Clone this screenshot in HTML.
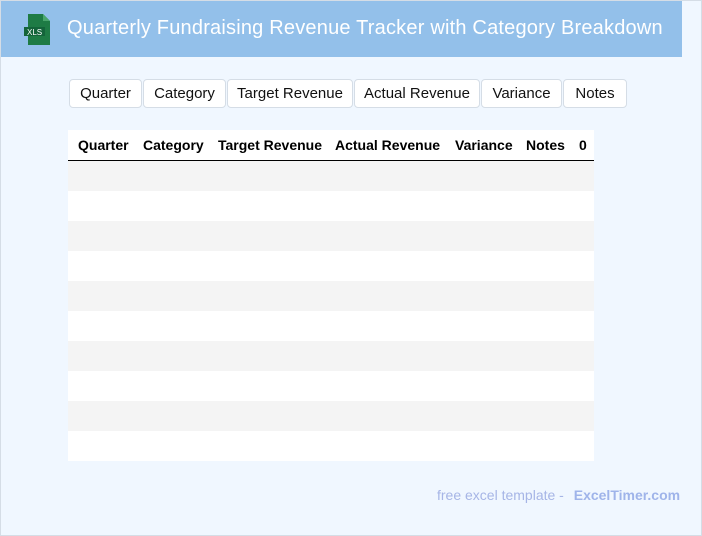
<!DOCTYPE html>
<html><head><style>
body{margin:0;width:702px;height:536px;overflow:hidden;font-family:"Liberation Sans",sans-serif;}
.page{position:absolute;left:0;top:0;width:700px;height:534px;border:1px solid #d5dde6;background:#f0f7ff;}
.hdr{position:absolute;left:0;top:0;width:681px;height:56px;background:#93c0ea;}
.hdr .t{position:absolute;left:66px;top:16px;color:#fff;font-size:20px;letter-spacing:0.2px;}
.icon{position:absolute;left:23px;top:13px;}
.btn{position:absolute;top:78px;height:27px;border:1px solid #d5dde6;border-radius:4px;background:#fff;font-size:15px;line-height:27px;text-align:center;color:#111;}
table{position:absolute;left:67px;top:129px;width:526px;border-collapse:collapse;}
td,th{height:30px;padding:0;}
th{font-size:14px;font-weight:bold;text-align:left;border-bottom:1px solid #000;background:#fff;}
tr:nth-child(even) td{background:#f4f4f4;}
tr:nth-child(odd) td{background:#fff;}
.foot{position:absolute;left:436px;top:486px;font-size:14px;color:#a6b5e6;}
.foot b{color:#9fb4ea;margin-left:6px;}
</style></head><body><div class="page">
<div class="hdr">
<svg class="icon" width="27" height="31" viewBox="0 0 27 31"><path d="M4 0H19L26 7V31H4Z" fill="#1e7b45"/><path d="M19 0V7H26Z" fill="#4aa66d"/><rect x="0" y="13" width="21" height="9" fill="#13643a"/><text x="3" y="21" font-size="8" fill="#fff" font-family="Liberation Sans">XLS</text></svg>
<div class="t">Quarterly Fundraising Revenue Tracker with Category Breakdown</div>
</div>
<div class="btn" style="left:68px;width:71px">Quarter</div>
<div class="btn" style="left:142px;width:81px">Category</div>
<div class="btn" style="left:226px;width:124px">Target Revenue</div>
<div class="btn" style="left:353px;width:124px">Actual Revenue</div>
<div class="btn" style="left:480px;width:79px">Variance</div>
<div class="btn" style="left:562px;width:62px">Notes</div>
<table>
<tr><th style="width:65px;padding-left:10px">Quarter</th><th style="width:75px">Category</th><th style="width:117px">Target Revenue</th><th style="width:120px">Actual Revenue</th><th style="width:71px">Variance</th><th style="width:53px">Notes</th><th>0</th></tr>
<tr><td colspan=7></td></tr><tr><td colspan=7></td></tr><tr><td colspan=7></td></tr><tr><td colspan=7></td></tr><tr><td colspan=7></td></tr>
<tr><td colspan=7></td></tr><tr><td colspan=7></td></tr><tr><td colspan=7></td></tr><tr><td colspan=7></td></tr><tr><td colspan=7></td></tr>
</table>
<div class="foot">free excel template - <b>ExcelTimer.com</b></div>
</div></body></html>
